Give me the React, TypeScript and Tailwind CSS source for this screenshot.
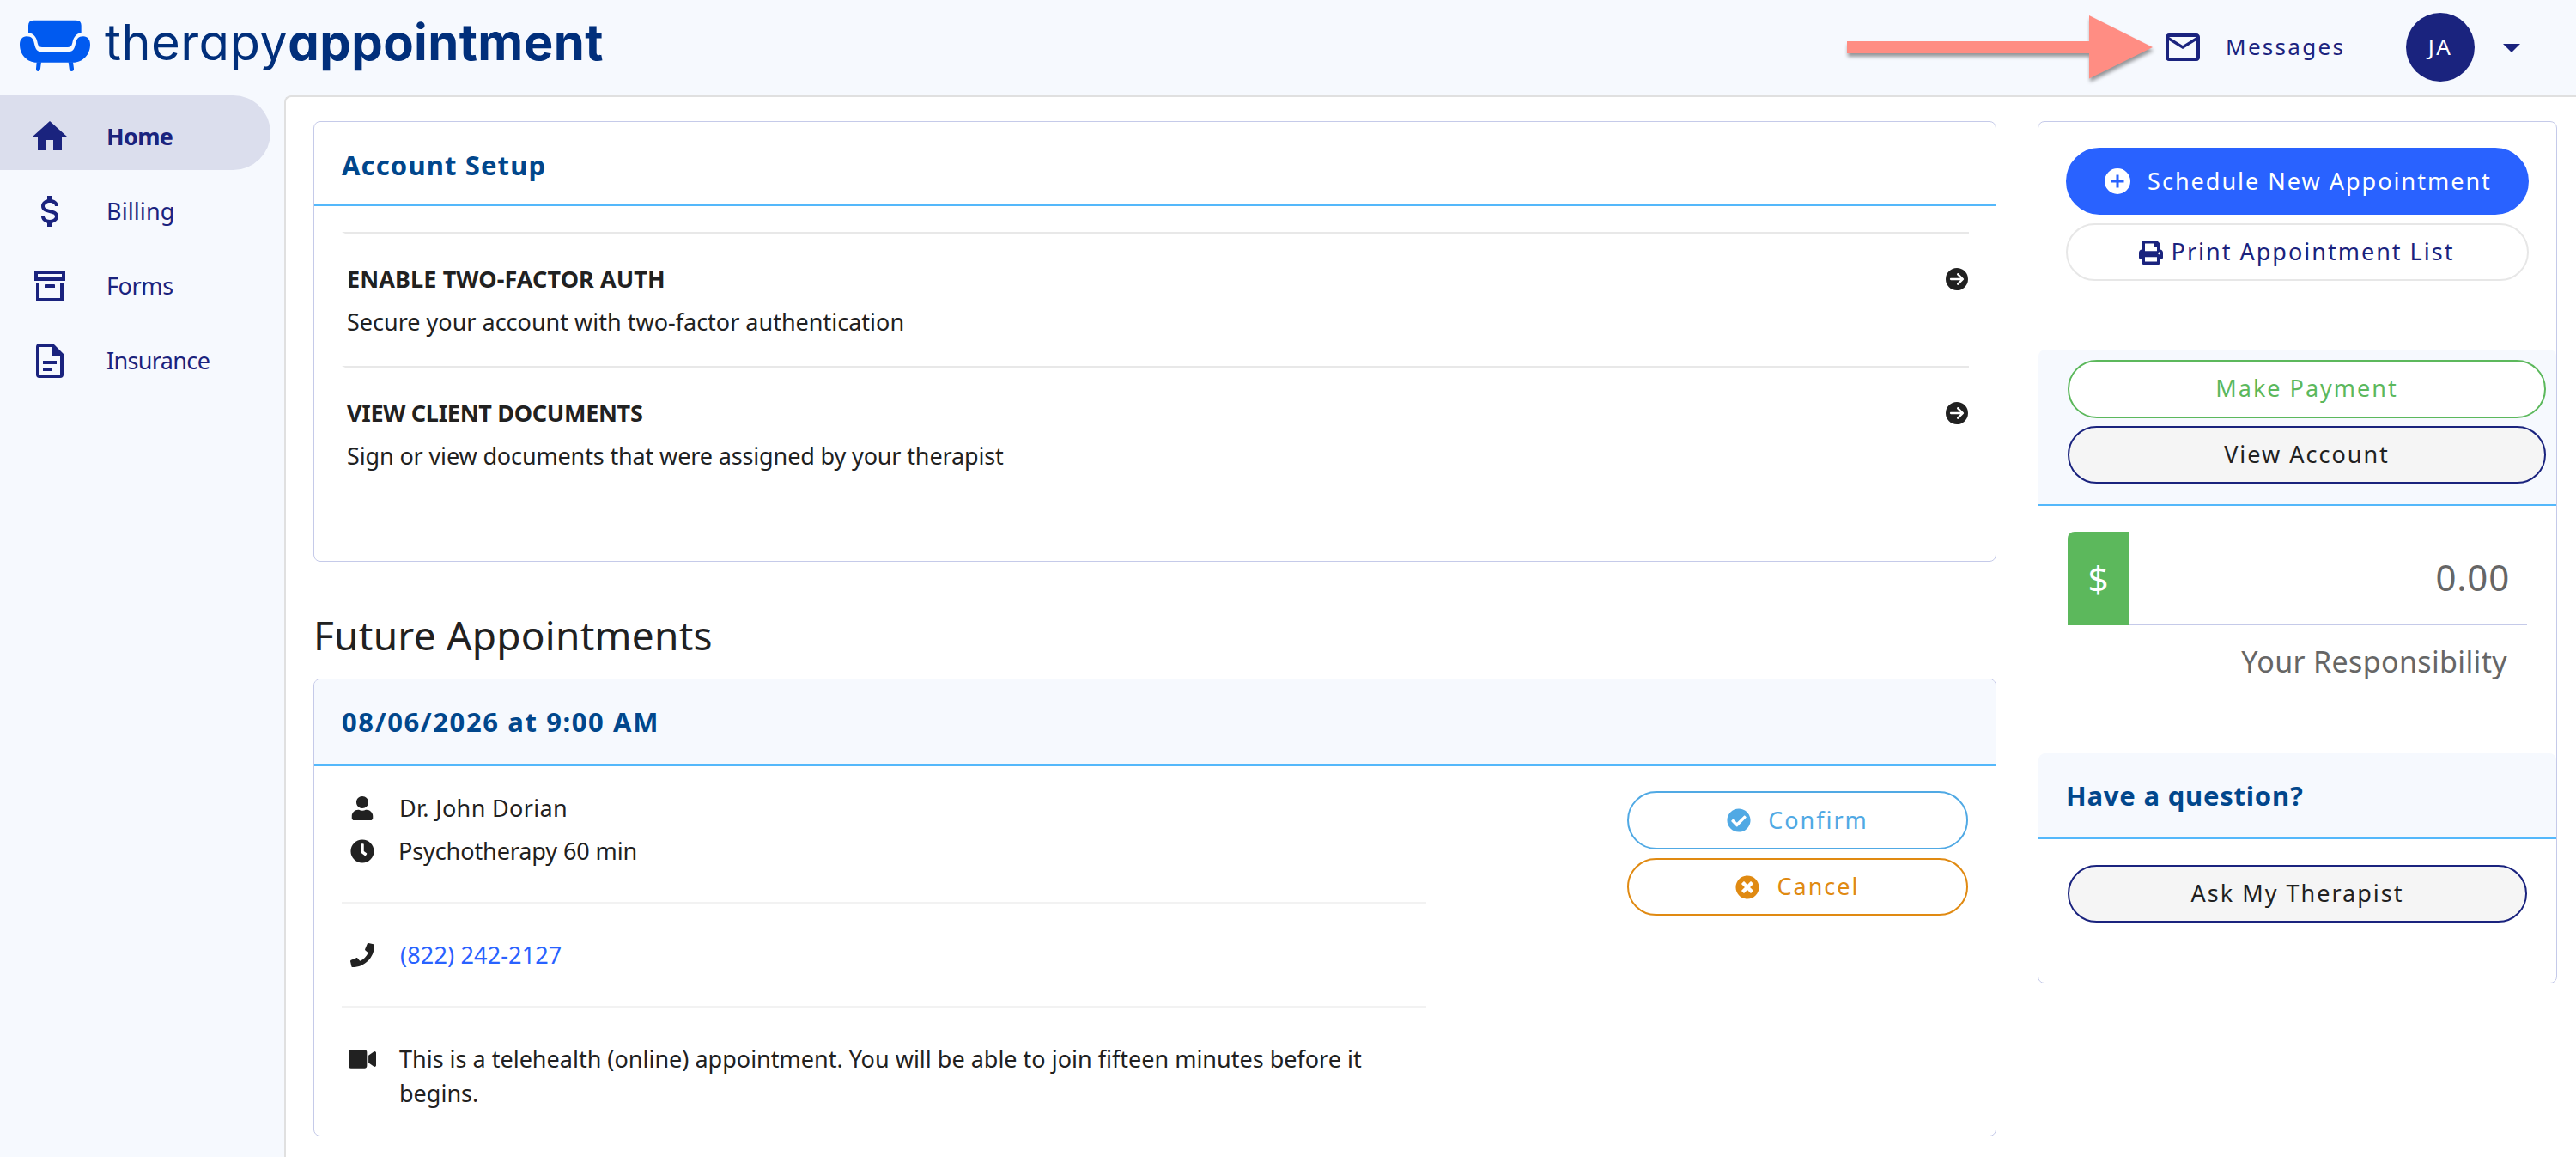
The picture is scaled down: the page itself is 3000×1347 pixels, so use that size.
import type { ReactNode } from 'react';
import { FaCheckCircle, FaClock, FaPhone, FaPrint, FaTimesCircle, FaUser, FaVideo } from 'react-icons/fa';
import { FaCircleArrowRight } from 'react-icons/fa6';

const icons = {
  home: 'M10,20V14H14V20H19V12H22L12,3L2,12H5V20H10Z',
  billing:
    'M7,15H9C9,16.08 10.37,17 12,17C13.63,17 15,16.08 15,15C15,13.9 13.96,13.5 11.76,12.97C9.64,12.44 7,11.78 7,9C7,7.21 8.47,5.69 10.5,5.18V3H13.5V5.18C15.53,5.69 17,7.21 17,9H15C15,7.92 13.63,7 12,7C10.37,7 9,7.92 9,9C9,10.1 10.04,10.5 12.24,11.03C14.36,11.56 17,12.22 17,15C17,16.79 15.53,18.31 13.5,18.82V21H10.5V18.82C8.47,18.31 7,16.79 7,15Z',
  forms:
    'M20 21H4V10H6V19H18V10H20V21M3 3H21V9H3V3M5 5V7H19V5H5M9.5 11H14.5C14.78 11 15 11.22 15 11.5V13H9V11.5C9 11.22 9.22 11 9.5 11Z',
  insurance:
    'M6,2A2,2 0 0,0 4,4V20A2,2 0 0,0 6,22H18A2,2 0 0,0 20,20V8L14,2H6M6,4H13V9H18V20H6V4M8,12V14H16V12H8M8,16V18H13V16H8Z',
  mail: 'M22 6C22 4.9 21.1 4 20 4H4C2.9 4 2 4.9 2 6V18C2 19.1 2.9 20 4 20H20C21.1 20 22 19.1 22 18V6M20 6L12 11L4 6H20M20 18H4V8L12 13L20 8V18Z',
  caret: 'M7,10L12,15L17,10H7Z',
  plus: 'M17,13H13V17H11V13H7V11H11V7H13V11H17M12,2A10,10 0 0,0 2,12A10,10 0 0,0 12,22A10,10 0 0,0 22,12A10,10 0 0,0 12,2Z',
};

const navItems = [
  { label: 'Home', icon: icons.home, tracking: '-tracking-[0.7px]', active: true },
  { label: 'Billing', icon: icons.billing, tracking: 'tracking-[0.1px]', active: false },
  { label: 'Forms', icon: icons.forms, tracking: '-tracking-[0.4px]', active: false },
  { label: 'Insurance', icon: icons.insurance, tracking: '-tracking-[0.65px]', active: false },
];

const setupTasks = [
  {
    title: 'ENABLE TWO-FACTOR AUTH',
    text: 'Secure your account with two-factor authentication',
    titleTracking: 'tracking-[0.1px]',
    textTracking: 'tracking-normal',
  },
  {
    title: 'VIEW CLIENT DOCUMENTS',
    text: 'Sign or view documents that were assigned by your therapist',
    titleTracking: '-tracking-[0.3px]',
    textTracking: '-tracking-[0.14px]',
  },
];

const Icon = ({ path, className = 'size-12' }: { path: string; className?: string }) => (
  <svg viewBox="0 0 24 24" className={`shrink-0 fill-current ${className}`} fillRule="evenodd">
    <path d={path} />
  </svg>
);

const Logo = () => (
  <div className="flex items-center pb-1 pl-[23px]">
    <svg viewBox="40 38 246 180" className="h-[60px] w-[82px] fill-[#005af0]">
      <path d="M88 40H237Q255 40 255 58V84C238 86 229 98 225 114C222 128 220 134 208 134H118C106 134 104 128 101 114C97 98 88 86 70 84V58Q70 40 88 40Z" />
      <path d="M64 96C82 96 88 106 91 122C95 142 102 150 118 150H208C224 150 231 142 235 122C238 106 244 96 262 96C277 96 286 108 286 124C286 158 262 187 226 187H100C64 187 40 158 40 124C40 108 49 96 64 96Z" />
      <path d="M99 186H115L112 208Q110 218 104 218Q96 218 97 208ZM210 186H226L229 208Q230 218 221 218Q214 218 213 208Z" />
    </svg>
    <span className="ml-[17px] pb-2 font-['Inter',sans-serif] text-[58px] leading-none font-normal tracking-[0.4px] text-[#012f7b] [font-feature-settings:'cv11']">
      therapy<span className="font-bold">appointment</span>
    </span>
  </div>
);

const Header = () => (
  <header className="flex h-[111px] items-center pr-[51px] pb-0.5 text-[#1a237e]">
    <Logo />
    {/* Callout arrow */}
    <svg viewBox="0 0 367 109" className="ml-auto h-[109px] w-[367px] fill-[#ff8d83] drop-shadow-[1px_4px_2px_rgba(0,0,0,0.4)]">
      <path d="M0 48H282V18L356 55L282 91.500V62H0Z" />
    </svg>
    <Icon path={icons.mail} />
    <span className="ml-[26px] w-[210px] text-[26px] tracking-[2.3px]">Messages</span>
    <div className="flex size-20 items-center justify-center rounded-full bg-[#1a237e] text-[26px] tracking-[2.3px] text-white">
      JA
    </div>
    <Icon path={icons.caret} className="ml-[19px] size-12" />
  </header>
);

const Sidebar = () => (
  <nav className="w-[331px] shrink-0 text-[27px] text-[#1a237e]">
    {navItems.map((item) => (
      <a
        key={item.label}
        className={`flex h-[87px] w-[315px] items-center rounded-r-full pt-[9px] pl-[34px] ${
          item.active ? 'bg-[#dbdeed] font-bold' : ''
        }`}
      >
        <Icon path={item.icon} />
        <span className={`ml-[42px] ${item.tracking}`}>{item.label}</span>
      </a>
    ))}
  </nav>
);

const PillButton = ({ className, children }: { className: string; children: ReactNode }) => (
  <button className={`flex items-center justify-center rounded-full border-2 text-[27px] tracking-[2px] ${className}`}>
    {children}
  </button>
);

const AccountSetup = () => (
  <section className="h-[513px] rounded-lg border border-[#c5cae9]">
    <h2 className="flex h-[98px] items-center border-b-2 border-[#54b8fb] pt-1 pl-8 text-[31px] font-bold tracking-[1.14px] text-[#01478c]">
      Account Setup
    </h2>
    <div className="pt-[30px] pr-[31px] pl-8">
      {setupTasks.map((task) => (
        <div
          key={task.title}
          className="flex h-[156px] items-start justify-between border-t-2 border-l-4 border-t-[#e8e8e8] border-l-transparent pr-px pl-0.5"
        >
          <div className="pt-7 text-[27px] leading-[50px]">
            <h3 className={`font-bold ${task.titleTracking}`}>{task.title}</h3>
            <p className={task.textTracking}>{task.text}</p>
          </div>
          <FaCircleArrowRight className="mt-10 size-[26px]" />
        </div>
      ))}
    </div>
  </section>
);

const DetailRow = ({ icon, className = 'leading-[50px]', children }: { icon: ReactNode; className?: string; children: ReactNode }) => (
  <div className={`flex pl-2 ${className}`}>
    <span className="mr-[26px] flex h-[1lh] w-8 shrink-0 items-center justify-center">{icon}</span>
    {children}
  </div>
);

const AppointmentCard = () => (
  <section className="mt-4 h-[533px] overflow-hidden rounded-lg border border-[#c5cae9]">
    <h2 className="flex h-[101px] items-center border-b-2 border-[#54b8fb] bg-[#f6f9fe] pl-8 text-[31px] font-bold tracking-[1.6px] text-[#01478c]">
      08/06/2026 at 9:00 AM
    </h2>
    <div className="flex justify-between pr-8 pl-8">
      <div className="w-[1263px] pt-6 text-[27px]">
        <DetailRow icon={<FaUser className="size-7" />}>
          <span className="pl-px tracking-[0.35px]">Dr. John Dorian</span>
        </DetailRow>
        <DetailRow icon={<FaClock className="size-7" />}>
          <span className="-tracking-[0.1px]">Psychotherapy 60 min</span>
        </DetailRow>
        <hr className="mt-[34px] border-t-2 border-[#f2f2f2]" />
        <DetailRow icon={<FaPhone className="size-7" />} className="mt-[35px] leading-[50px]">
          <a className="pl-0.5 tracking-[0.15px] text-[#2962ff]">(822) 242-2127</a>
        </DetailRow>
        <hr className="mt-[34px] border-t-2 border-[#f2f2f2]" />
        <DetailRow icon={<FaVideo className="size-8" />} className="mt-10 leading-10">
          <p className="w-[1180px] pl-px">
            This is a telehealth (online) appointment. You will be able to join fifteen minutes before it begins.
          </p>
        </DetailRow>
      </div>
      <div className="flex w-[397px] flex-col gap-2.5 pt-[29px]">
        <PillButton className="h-[68px] gap-5 border-[#50a9e4] text-[#50a9e4]">
          <FaCheckCircle className="size-7" />
          Confirm
        </PillButton>
        <PillButton className="h-[67px] gap-5 border-[#e08a12] text-[#e08a12]">
          <FaTimesCircle className="size-7" />
          Cancel
        </PillButton>
      </div>
    </div>
  </section>
);

const ActionPanel = () => (
  <aside className="h-[1004px] w-[605px] overflow-hidden rounded-lg border border-[#c5cae9]">
    <div className="flex h-[265px] flex-col gap-2.5 px-8 pt-[30px]">
      <PillButton className="h-[78px] gap-5 border-[#2962ff] bg-[#2962ff] pl-0.5 text-white">
        <Icon path={icons.plus} className="-mx-[3px] size-9" />
        Schedule New Appointment
      </PillButton>
      <PillButton className="h-[67px] gap-2.5 border-[#e7e7e7] pr-0.5 text-[#1a237e]">
        <FaPrint className="size-7" />
        Print Appointment List
      </PillButton>
    </div>

    <div className="flex h-[182px] flex-col gap-[9px] rounded-t-lg border-b-2 border-[#54b8fb] bg-[#f6f9fe] pt-3 pr-3 pl-[34px]">
      <PillButton className="h-[68px] border-[#5cb85c] bg-white pb-0.5 tracking-[1.75px] text-[#5cb85c]">Make Payment</PillButton>
      <PillButton className="h-[67px] border-[#1a237e] bg-[#f5f5f5]">View Account</PillButton>
    </div>

    {/* Balance */}
    <div className="h-[288px] pt-[30px] pr-[34px] pl-[34px] text-[#666]">
      <div className="flex h-[109px] text-[42px]">
        <span className="flex w-[71px] items-center justify-center rounded-tl-lg bg-[#5cb85c] text-white">$</span>
        <span className="flex flex-1 items-center justify-end border-b-2 border-[#c5cae9] pr-5 pb-0.5 tracking-[0.8px]">0.00</span>
      </div>
      <p className="mt-[17px] pr-[23px] text-right text-[34px] leading-[50px] tracking-[0.35px]">Your Responsibility</p>
    </div>

    <h2 className="flex h-[100px] items-center rounded-t-lg border-b-2 border-[#54b8fb] bg-[#f6f9fe] pl-8 text-[31px] font-bold tracking-[0.78px] text-[#01478c]">
      Have a question?
    </h2>
    <div className="flex flex-col px-[34px] pt-[30px]">
      <PillButton className="h-[67px] border-[#1a237e] bg-[#f5f5f5]">Ask My Therapist</PillButton>
    </div>
  </aside>
);

export default function App() {
  return (
    <div className="h-[1347px] w-[3000px] overflow-hidden bg-[#f6f9fe] font-['Noto_Sans','Open_Sans',sans-serif] text-[#212121]">
      <Header />
      <div className="flex h-[1236px]">
        <Sidebar />
        <main className="flex flex-1 items-start gap-12 rounded-tl-lg border-t-2 border-l-2 border-[#e0e0e0] bg-white pt-7 pl-8">
          <div className="w-[1960px]">
            <AccountSetup />
            <h1 className="mt-[50px] text-[46px] leading-[70px] tracking-[0.25px]">Future Appointments</h1>
            <AppointmentCard />
          </div>
          <ActionPanel />
        </main>
      </div>
    </div>
  );
}
